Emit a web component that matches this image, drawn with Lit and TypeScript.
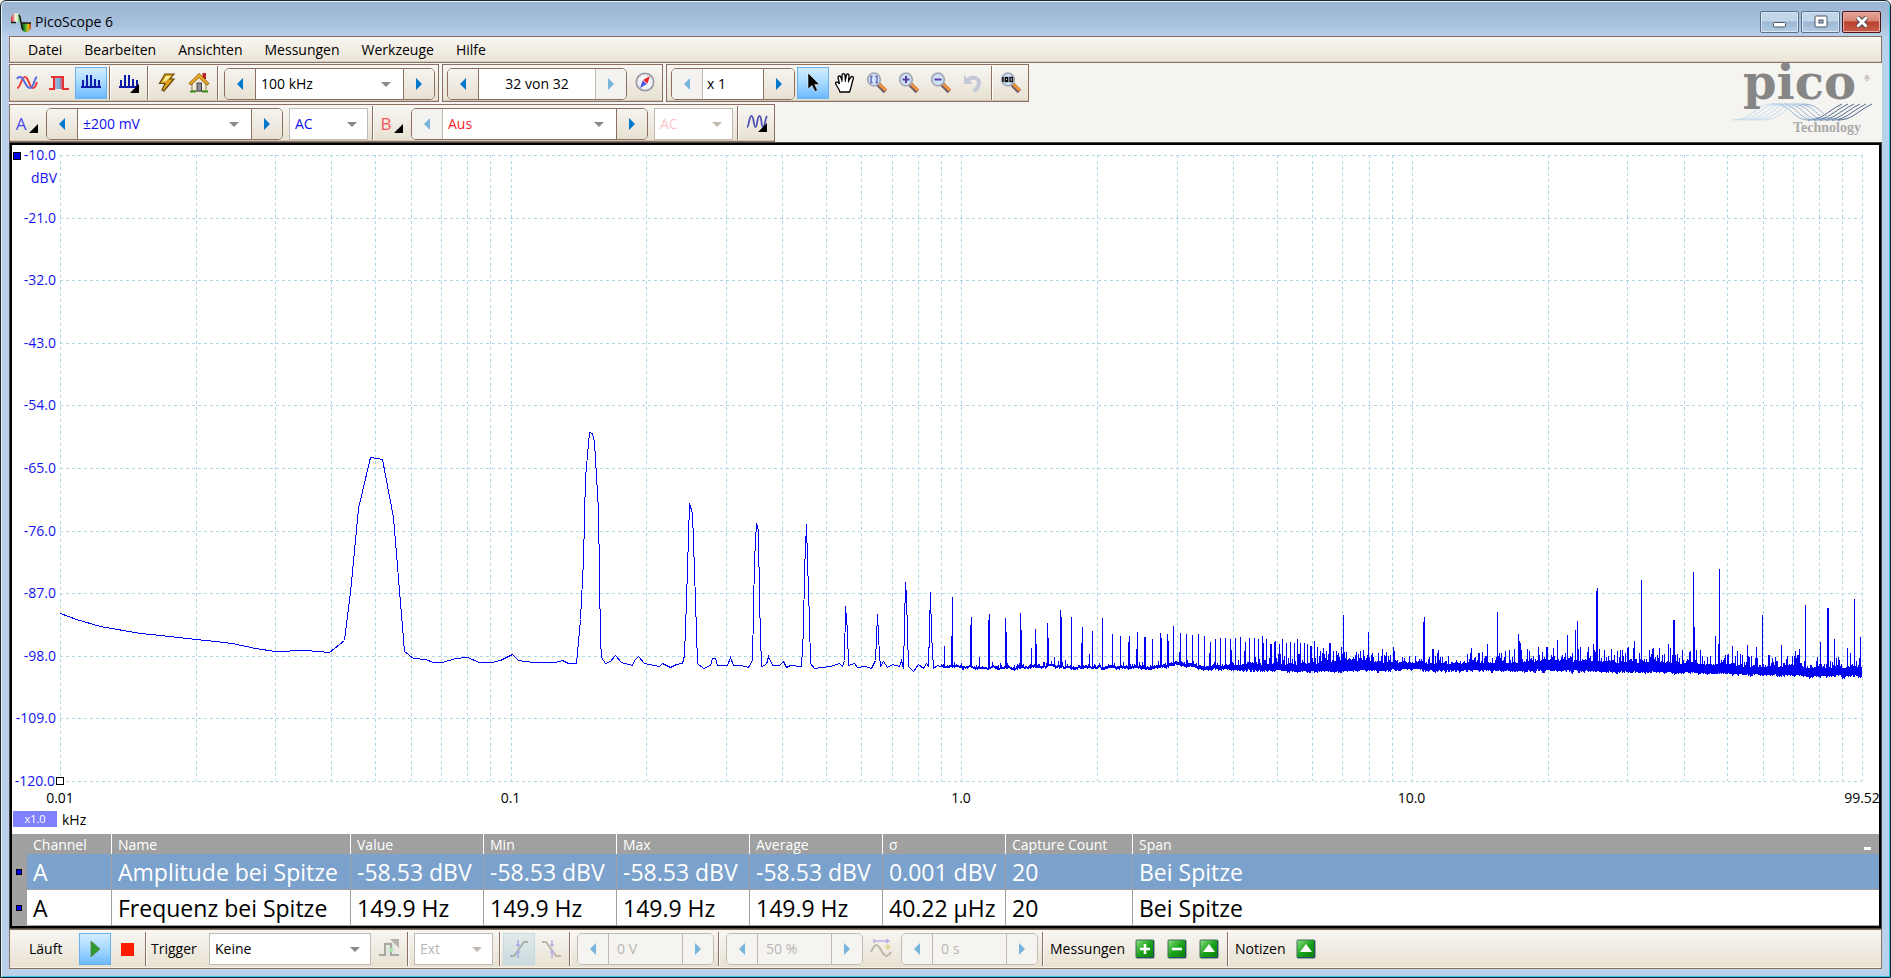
import { LitElement, html, css, svg, nothing } from "lit";
import { customElement } from "lit/decorators.js";
import { classMap } from "lit/directives/class-map.js";

/* ---------- spectrum data, in plot units (1802 x 626) ---------- */

const PLOT_W = 1802;
const PLOT_H = 626;
const DECADE = PLOT_W / Math.log10(9952);

const LOW_BAND: number[][] = [
  [0, 458], [16, 464], [40, 471], [80, 478], [100, 480], [136, 484], [155, 486], [172, 488], [195, 493], [215, 496],
  [245, 495], [269, 497], [284, 485], [290, 437], [298, 353], [310, 302], [322, 304], [333, 362], [344, 496],
  [353, 503], [365, 504], [373, 507], [382, 507], [395, 503], [407, 502], [419, 507], [431, 507], [440, 505],
  [452, 499], [458, 505], [473, 507], [495, 507], [502, 505], [508, 508], [516, 508], [520, 464], [523, 405],
  [525, 322], [529, 277], [532, 278], [534, 287], [538, 355], [540, 485], [541, 502], [545, 508], [550, 506],
  [555, 500], [561, 507], [572, 510], [574, 505], [578, 501], [584, 508], [599, 511], [602, 508], [610, 512],
  [616, 509], [622, 508], [624, 500], [626, 445], [629, 348], [632, 358], [635, 445], [637, 508], [643, 513],
  [650, 510], [652, 503], [655, 503], [657, 510], [667, 510], [670, 502], [673, 510], [681, 510], [688, 512],
  [692, 505], [694, 405], [696, 368], [698, 375], [699, 445], [701, 511], [706, 509], [708, 501], [712, 510],
  [719, 510], [723, 506], [726, 512], [730, 510], [741, 511], [743, 475], [744, 415], [746, 369], [747, 405],
  [749, 465], [750, 508], [754, 513], [762, 512], [770, 511], [779, 508], [782, 511], [784, 505], [785, 451],
  [787, 475], [788, 510], [794, 508], [797, 512], [805, 511], [811, 513], [815, 505], [817, 459], [819, 500],
  [820, 511], [823, 506], [827, 512], [832, 509], [839, 511], [841, 505], [843, 513], [845, 427], [846, 442],
  [848, 511], [853, 516], [858, 509], [863, 513], [866, 508], [868, 511], [870, 437], [871, 479], [873, 513],
  [877, 510], [880, 511],
];

/* column, top of the spike */
const SPIKES: number[][] = [
  [884, 491], [891, 481], [892, 442], [911, 462], [910, 470], [919, 502], [929, 459], [928, 465], [945, 463],
  [946, 477], [960, 458], [961, 475], [971, 493], [975, 474], [976, 489], [987, 468], [988, 483], [994, 502],
  [1005, 505], [1000, 455], [1001, 462], [1011, 462], [1022, 472], [1021, 488], [1029, 499], [1032, 476],
  [1042, 463], [1052, 479], [1060, 481], [1069, 481], [1068, 487], [1077, 477], [1076, 494], [1085, 482],
  [1084, 482], [1092, 484], [1100, 478], [1101, 483], [1107, 479], [1108, 486], [1113, 471], [1120, 478],
  [1119, 497], [1126, 479], [1132, 480], [1138, 479], [1144, 481], [1150, 487], [1149, 498], [1155, 484],
  [1160, 483], [1165, 483], [1170, 484], [1171, 495], [1175, 483], [1180, 482], [1185, 487], [1184, 496],
  [1189, 483], [1194, 483], [1198, 484], [1202, 481], [1203, 488], [1206, 484], [1211, 489], [1210, 489],
  [1215, 486], [1214, 487], [1219, 489], [1222, 484], [1226, 488], [1230, 487], [1234, 488], [1237, 484],
  [1240, 488], [1244, 488], [1247, 489], [1251, 491], [1250, 491], [1254, 486], [1257, 492], [1260, 496],
  [1263, 493], [1266, 496], [1270, 488], [1269, 488], [1273, 496], [1276, 496], [1278, 498], [1281, 492],
  [1283, 460], [1284, 497], [1286, 497], [1308, 477], [1311, 500], [1313, 502], [1322, 494], [1333, 492],
  [1334, 496], [1364, 462], [1363, 467], [1373, 494], [1372, 494], [1378, 495], [1411, 493], [1427, 489],
  [1437, 457], [1458, 479], [1459, 486], [1460, 488], [1461, 495], [1478, 492], [1497, 485], [1507, 480],
  [1515, 475], [1517, 466], [1520, 492], [1533, 489], [1534, 495], [1537, 433], [1536, 436], [1539, 494],
  [1557, 496], [1562, 495], [1568, 492], [1573, 493], [1574, 486], [1581, 425], [1589, 495], [1599, 493],
  [1608, 489], [1613, 465], [1614, 465], [1629, 497], [1633, 417], [1634, 472], [1640, 495], [1655, 481],
  [1658, 489], [1659, 414], [1672, 491], [1677, 496], [1687, 490], [1696, 492], [1702, 460], [1721, 490],
  [1727, 501], [1735, 496], [1739, 494], [1745, 450], [1760, 487], [1767, 453], [1768, 453], [1774, 484],
  [1787, 493], [1790, 498], [1794, 444], [1800, 482],
];

/* noise floor: column, upper edge, lower edge, jitter */
const FLOOR: number[][] = [
  [880, 511, 512, 3], [1000, 511, 512, 3], [1100, 511, 513, 3], [1118, 506, 508, 3], [1135, 511, 513, 3],
  [1200, 509, 514, 5], [1250, 508, 515, 9], [1285, 505, 515, 10], [1310, 506, 514, 8], [1345, 508, 513, 9],
  [1400, 508, 514, 8], [1470, 507, 514, 11], [1500, 505, 514, 10], [1540, 506, 515, 10], [1600, 508, 516, 10],
  [1660, 509, 517, 9], [1720, 512, 519, 8], [1802, 512, 520, 9],
];

function floorAt(x: number): number[] {
  let i = 1;
  while (i < FLOOR.length - 1 && FLOOR[i][0] < x) i++;
  const a = FLOOR[i - 1];
  const b = FLOOR[i];
  const t = (x - a[0]) / (b[0] - a[0]);
  return [1, 2, 3].map((k) => a[k] + (b[k] - a[k]) * t);
}

function tracePath(): string {
  let seed = 97;
  const rnd = () => {
    seed = (seed * 16807) % 2147483647;
    return seed / 2147483647;
  };
  const spikes = new Map(SPIKES.map(([x, y]) => [x, y] as [number, number]));
  const parts = LOW_BAND.map(([x, y], i) => `${i ? "L" : "M"}${x + 0.5} ${y + 0.5}`);
  let drift = 0;
  for (let x = 881; x < PLOT_W; x++) {
    const [up, low, jit] = floorAt(x);
    const sparse = x < 1180;
    drift = drift * 0.7 + (rnd() - 0.5) * 2;
    let top = up + drift - Math.pow(rnd(), sparse ? 6 : 3) * jit * 1.4;
    const bottom = low + drift * (sparse ? 1 : 0.5) + Math.pow(rnd(), 2) * (sparse ? 1 : 3);
    const spike = spikes.get(x);
    if (spike !== undefined) top = spike;
    parts.push(`L${x + 0.5} ${Math.round(bottom)}V${Math.round(top)}V${Math.round(bottom)}`);
  }
  return parts.join("");
}

const TRACE = tracePath();

function gridColumns(): number[] {
  const xs: number[] = [];
  for (let d = 0; d < 4; d++) for (let m = 1; m < 10; m++) xs.push(Math.round(DECADE * (d + Math.log10(m))));
  xs.push(PLOT_W);
  return xs;
}

const Y_LABELS = ["-10.0", "-21.0", "-32.0", "-43.0", "-54.0", "-65.0", "-76.0", "-87.0", "-98.0", "-109.0", "-120.0"];
const X_LABELS = ["0.01", "0.1", "1.0", "10.0", "99.52"];

/* ---------- icons ---------- */

const icon = (body: unknown, size = 22) =>
  html`<svg width=${size} height=${size} viewBox="0 0 22 22" aria-hidden="true">${body}</svg>`;

const corner = svg`<path d="M21 12V21H12Z" fill="#000"/>`;

const icons = {
  scope: icon(svg`<path d="M1 16C5 16 5 5 9 5C13 5 13 16 17 16C19.500 16 20 13 21 10" fill="none" stroke="#f03a3a" stroke-width="2"/>
    <path d="M1 7C2 5 4 4 6 6C9 9 10 16 14 16C18 16 18 6 21 5" fill="none" stroke="#5a6fe6" stroke-width="2"/>`),
  persistence: icon(svg`<defs><linearGradient id="pg"><stop offset="0" stop-color="#e8a0a8"/><stop offset=".5" stop-color="#6fb6ea"/><stop offset="1" stop-color="#f04040"/></linearGradient></defs>
    <rect x="5" y="4" width="11" height="13" fill="url(#pg)"/><path d="M1 17H6V5H15V17H21" fill="none" stroke="#e83030" stroke-width="2"/><path d="M3 5H15" stroke="#e83030" stroke-width="2"/>`),
  spectrum: icon(svg`<path d="M3 8V15M7 3V15M11 3V15M15 7V15M19 8V15" stroke="#0c1ca8" stroke-width="2"/><path d="M1 15H21" stroke="#0c1ca8" stroke-width="2"/>`),
  spectrumMore: icon(svg`<path d="M3 8V15M7 3V15M11 3V15M15 7V15M19 8V15" stroke="#0c1ca8" stroke-width="2"/><path d="M1 15H21" stroke="#0c1ca8" stroke-width="2"/>${corner}`),
  bolt: icon(svg`<path d="M9 2H18L14 7H18L8 19L6 18L9 11.500H3.500Z" fill="#dba01c" stroke="#6a4608" stroke-width="1.200"/><path d="M10 4H15L10 9L6.500 10Z" fill="#fff0a0"/>`),
  home: icon(svg`<rect x="14.500" y="1" width="3.500" height="6" fill="#c02020"/><path d="M4 11V19H18V11L11 5Z" fill="#f4ecd8" stroke="#8a7a58" stroke-width="1"/><path d="M1 11.500L11 1.500L21 11.500L19 13L11 5.500L3 13Z" fill="#f0b020" stroke="#8a5c10" stroke-width="1"/><rect x="9" y="11" width="4.500" height="8" fill="#8a8f98" stroke="#444"/><path d="M2 19.500H8M14 19.500H20" stroke="#3a9018" stroke-width="2"/>`),
  compass: icon(svg`<circle cx="11" cy="10" r="8.700" fill="#f6f6fb" stroke="#9a9aa4" stroke-width="1.800"/><circle cx="11" cy="10" r="6.500" fill="none" stroke="#c0c0cc" stroke-dasharray="1 3"/><path d="M16 4L13.500 11.500L9 8Z" fill="#f02020"/><path d="M6 16L8.500 8.500L13 12Z" fill="#4a58e8"/>`),
  cursor: icon(svg`<path d="M6 1V17L10 13.500L13 19.500L15.500 18.300L12.700 12.500H17.500Z" fill="#000" stroke="#fff" stroke-width=".5"/>`),
  hand: icon(svg`<path d="M6 20C5 16 1.500 13 1.500 11C2 9.500 4.500 10 5.500 12L4 5.500C4 3.500 6.500 3.500 7 5.500L8 8.500L8 3C8.500 1 10.500 1.500 11 3L11.300 8L12.500 2.800C13.500 1.200 15.300 2 15 4L14.500 9L17 5C18.200 3.800 20 5 19.300 6.800C18 10 17.500 15 15.500 20Z" fill="#fff" stroke="#000" stroke-width="1.300"/><path d="M8 8.500V10M11.300 8V10M14.500 9V10.500" stroke="#000"/>`),
  undo: icon(svg`<path d="M5 9C9 4 17 5 17 11C17 14 15 16.500 12 19" fill="none" stroke="#c3c9d8" stroke-width="4"/><path d="M2 3V12H11Z" fill="#c3c9d8"/>`),
  wave: icon(svg`<path d="M1 15C3 15 3 4 5.500 4C8 4 7.500 15 9.500 15C11.500 15 11 4 13.500 4C16 4 15 15 17 15C19 15 19 7 21 4" fill="none" stroke="#5054b4" stroke-width="1.800"/><path d="M21 11V20H12Z" fill="#000"/>`),
  pulse: icon(svg`<rect x="9" y="4" width="8" height="15" fill="#dfe5e0"/><path d="M1 17H7V6H13V17H21" fill="none" stroke="#a9a79f" stroke-width="2"/><path d="M12 1H21V10Z" fill="#b5b1a8"/><circle cx="13" cy="12" r="2" fill="#a4e8a0"/>`),
  rising: icon(svg`<path d="M2 18H6L16 4H20" fill="none" stroke="#a8b2a8" stroke-width="2"/><path d="M10 2V9M10 12V20M8 7H12M8 14H12" stroke="#a9a8e4" stroke-width="1.500"/>`),
  falling: icon(svg`<path d="M2 4H6L16 18H21" fill="none" stroke="#bdb7a8" stroke-width="2"/><path d="M12 2V9M12 12V20M10 7H14M10 14H14" stroke="#b7b0e4" stroke-width="1.500"/>`),
  pretrigger: icon(svg`<path d="M1 14C5 5 7 5 11 12S17 20 21 14" fill="none" stroke="#bdb7a8" stroke-width="2"/><path d="M4 3H18M4 1V5M16 1L19 3L16 5" fill="none" stroke="#b7b0e8" stroke-width="1.500"/><path d="M18 6L21 9L18 12L15 9Z" fill="#e0d890"/>`),
};

const magnifier = (mark: unknown) =>
  icon(svg`<path d="M12 12L19.500 19.500" stroke="#6c5a6c" stroke-width="5"/><path d="M12.500 11.500L20 18.500" stroke="#f0913a" stroke-width="3"/>
    <circle cx="8" cy="7.500" r="6.300" fill="#cfe4fa" stroke="#a5a9b8" stroke-width="1.800"/>${mark}`);

const zoomArea = magnifier(svg`<path d="M6.500 4.500H5V10.500H6.500M9.500 4.500H11V10.500H9.500" fill="none" stroke="#5c5ca8" stroke-width="1.300"/>`);
const zoomIn = magnifier(svg`<path d="M8 4V11M4.500 7.500H11.500" stroke="#5a3ca0" stroke-width="2"/>`);
const zoomOut = magnifier(svg`<path d="M4.500 7.500H11.500" stroke="#5a3ca0" stroke-width="2"/>`);
const zoomFull = magnifier(svg`<path d="M3 5V10" stroke="#111" stroke-width="1.600"/><rect x="5.300" y="5.500" width="2.400" height="4" fill="none" stroke="#111" stroke-width="1.400"/><rect x="10" y="5.500" width="2.400" height="4" fill="none" stroke="#111" stroke-width="1.400"/>`);

const greenMark = (mark: unknown) =>
  html`<svg width="20" height="20" viewBox="0 0 20 20" aria-hidden="true"><defs><linearGradient id="gg" x2="1" y2="1"><stop offset="0" stop-color="#8fe08a"/><stop offset=".5" stop-color="#17a317"/><stop offset="1" stop-color="#0a7a0a"/></linearGradient></defs>
  <rect x="1" y="1" width="18" height="18" rx="1" fill="url(#gg)" stroke="#3d6e50"/><path d="M2 18.500H18.500V2" fill="none" stroke="#274d70"/>${mark}</svg>`;
const plus = greenMark(svg`<path d="M10 5V15M5 10H15" stroke="#fff" stroke-width="2.600"/>`);
const minus = greenMark(svg`<path d="M5 10H15" stroke="#fff" stroke-width="2.600"/>`);
const upward = greenMark(svg`<path d="M10 5L16 13H4Z" fill="#fff"/>`);

const sep = html`<span class="sep"></span>`;

const tool = (label: string, content: unknown, on = false, disabled = false) =>
  html`<button class=${classMap({ tool: true, on })} aria-label=${label} title=${label} ?disabled=${disabled}>${content}</button>`;

const drop = (label: string, value: string, cls = "", disabled = false) =>
  html`<span class="drop ${cls}"><select aria-label=${label} ?disabled=${disabled}><option>${value}</option></select></span>`;

interface Stepper {
  label: string;
  value: string;
  cls: string;
  list?: boolean;
  noPrev?: boolean;
  noNext?: boolean;
  disabled?: boolean;
}

const stepper = (s: Stepper) => html`
  <span class="stepper ${s.cls} ${s.disabled ? "off" : ""}">
    <button class=${classMap({ step: true, dim: !!s.noPrev })} aria-label="${s.label} zurück" ?disabled=${s.disabled || s.noPrev}>
      <svg width="8" height="12" viewBox="0 0 8 12"><path d="M7 0V12L1 6Z" /></svg>
    </button>
    ${s.list
      ? drop(s.label, s.value, "", s.disabled)
      : html`<input type="text" aria-label=${s.label} .value=${s.value} ?disabled=${s.disabled} />`}
    <button class=${classMap({ step: true, next: true, dim: !!s.noNext })} aria-label="${s.label} weiter" ?disabled=${s.disabled || s.noNext}>
      <svg width="8" height="12" viewBox="0 0 8 12"><path d="M1 0V12L7 6Z" /></svg>
    </button>
  </span>`;

/* ---------- shared control styles ---------- */

const controls = css`
  * {
    box-sizing: border-box;
  }
  button,
  input,
  select {
    font: inherit;
    color: inherit;
    margin: 0;
    padding: 0;
    border: 0;
    border-radius: 0;
    background: none;
  }
  button {
    display: inline-flex;
    align-items: center;
    justify-content: center;
  }
  .tool {
    width: 32px;
    height: 32px;
    flex: none;
    border: 1px solid transparent;
  }
  .tool.on {
    border-color: #66b2ee;
    background: linear-gradient(#d3edff, #a5d8ff 50%, #6cbaff);
  }
  .tool.on:disabled {
    border-color: #c3dbe4;
    background: linear-gradient(#e2eaea, #cbdbdf);
  }
  .sep {
    flex: none;
    width: 2px;
    height: 34px;
    margin: 0 2px;
    border-left: 1px solid #8a7060;
    background: #fdfcfa;
  }
  .drop {
    display: inline-grid;
    align-items: center;
    height: 32px;
    margin: 0 2px 0 3px;
    border: 1px solid #c2bbb4;
    background: #fff;
  }
  .drop > select,
  .drop::after {
    grid-area: 1 / 1;
  }
  .drop > select {
    appearance: none;
    width: 100%;
    height: 30px;
    padding: 0 22px 0 5px;
    opacity: 1;
  }
  .drop::after {
    content: "";
    justify-self: end;
    margin-right: 10px;
    border: 5px solid transparent;
    border-top-color: #8a8a8a;
    border-bottom: 0;
    pointer-events: none;
  }
  .stepper {
    display: inline-flex;
    flex: none;
    height: 32px;
    margin: 0 2px 0 4px;
    border: 1px solid #8a7060;
    border-radius: 5px;
    overflow: hidden;
    background: #fff;
  }
  .stepper > .drop {
    flex: 1;
    margin: 0;
    border: 0;
    height: 30px;
    min-width: 0;
  }
  .stepper > .drop::after {
    margin-right: 12px;
  }
  .stepper input {
    flex: 1;
    width: 0;
    padding: 0 4px;
  }
  .step {
    width: 31px;
    flex: none;
    border-right: 1px solid #8a7060;
    background: linear-gradient(#f6f4f0, #e8e1d2);
  }
  .step.next {
    border-right: 0;
    border-left: 1px solid #8a7060;
  }
  .step path {
    fill: #0078cc;
  }
  .step.dim {
    border-color: #c2bbb4;
    background: #f4f2ee;
  }
  .step:disabled path {
    fill: #76b4dc;
  }
  .off {
    border-color: #c2bbb4;
    background: #f6f4f1;
    color: #b8b6b4;
  }
  .off .step {
    border-color: #c2bbb4;
    background: #f6f4f0;
  }
`;

/* ---------- channel and capture toolbars ---------- */

@customElement("scope-toolbars")
export class ScopeToolbars extends LitElement {
  static styles = [
    controls,
    css`
      :host {
        display: flex;
        justify-content: space-between;
        align-items: flex-start;
        padding: 1px 4px 0 0;
        background: #f6f4f1;
      }
      .bars {
        display: flex;
        flex-direction: column;
        align-items: flex-start;
        gap: 2px;
      }
      .line {
        display: flex;
        gap: 3px;
      }
      .group {
        display: flex;
        align-items: center;
        height: 38px;
        padding: 0 1px;
        border: 1px solid #8a7060;
        background: linear-gradient(#f8f6f3, #f0ece3 50%, #e8e0d0);
        box-shadow: inset 0 -1px #d0c6b8;
      }
      .group > .stepper {
        margin: 2px 2px 0 3px;
      }
      .group > .stepper.range {
        margin-right: 3px;
      }
      .group > .drop {
        margin-top: 2px;
      }
      .rate { width: 211px; }
      .buffer { width: 180px; }
      .buffer input { text-align: center; }
      .zoom { width: 124px; }
      .range { width: 237px; }
      .coupling { width: 79px; }
      .a { color: #1010f0; }
      .b { color: #fa1e2e; }
      .faint { color: #fcc4ca; }
      .faint::after { border-top-color: #c2bbb4; }
      .channel {
        display: flex;
        align-items: flex-end;
        gap: 3px;
        padding-top: 2px;
        font-size: 17px;
        line-height: 20px;
      }
      .initial { opacity: 0.75; }
      .logo { padding-top: 2px; flex: none; }
      .logo svg { display: block; overflow: visible; }
    `,
  ];

  private channel(name: string) {
    return html`<span class="channel ${name.toLowerCase()}"
      ><span class="initial">${name}</span><svg width="9" height="11" viewBox="0 0 9 11"><path d="M9 1V10H0Z" fill="#000" /></svg
    ></span>`;
  }

  private logo() {
    const strand = (i: number) =>
      svg`<path d="M${2 + i * 6} 54C${24 + i * 6} 54 ${24 + i * 6} 38 ${42 + i * 6} 38" stroke="#c3dcf0"/>
        <path d="M${42 + i * 6} 38C${64 + i * 6} 38 ${60 + i * 6} 54 ${80 + i * 6} 54" stroke="#8fb0d0"/>
        <path d="M${78 + i * 6} 54C${92 + i * 6} 54 ${96 + i * 6} 46 ${112 + i * 6} 38" stroke="#50688c"/>`;
    return html`<svg width="148" height="72" viewBox="0 0 148 72" role="img" aria-label="pico Technology">
      <g fill="none" stroke-width="1">${[0, 1, 2, 3, 4, 5].map(strand)}</g>
      <text x="13" y="33" font-family="DejaVu Serif" font-weight="700" font-size="48" fill="#868686">pico</text>
      <text x="134" y="15" font-family="Liberation Serif" font-size="8" fill="#868686">®</text>
      <text x="63" y="66" font-family="Liberation Serif" font-weight="700" font-size="14" fill="#a9a9a9">Technology</text>
    </svg>`;
  }

  render() {
    return html`
      <div class="bars">
        <div class="line">
          <div class="group">
            ${tool("Oszilloskopmodus", icons.scope)} ${tool("Nachleuchtmodus", icons.persistence)}
            ${tool("Spektralmodus", icons.spectrum, true)} ${sep} ${tool("Spektrumoptionen", icons.spectrumMore)} ${sep}
            ${tool("Auto-Setup", icons.bolt)} ${tool("Startseite", icons.home)} ${sep}
            ${stepper({ label: "Frequenzbereich", value: "100 kHz", cls: "rate", list: true })}
          </div>
          <div class="group">
            ${stepper({ label: "Puffer", value: "32 von 32", cls: "buffer", noNext: true })}
            ${tool("Puffernavigator", icons.compass)}
          </div>
          <div class="group">
            ${stepper({ label: "Zoomfaktor", value: "x 1", cls: "zoom", noPrev: true })}
            ${tool("Auswahl", icons.cursor, true)} ${tool("Verschieben", icons.hand)} ${tool("Bereich vergrößern", zoomArea)}
            ${tool("Vergrößern", zoomIn)} ${tool("Verkleinern", zoomOut)} ${tool("Zoom rückgängig", icons.undo, false, true)}
            ${sep} ${tool("Zoom 100 %", zoomFull)}
          </div>
        </div>
        <div class="group">
          ${tool("Kanal A", this.channel("A"))}
          ${stepper({ label: "Bereich A", value: "±200 mV", cls: "range a", list: true })}
          ${drop("Kopplung A", "AC", "coupling a")} ${sep} ${tool("Kanal B", this.channel("B"))}
          ${stepper({ label: "Bereich B", value: "Aus", cls: "range b", list: true, noPrev: true })}
          ${drop("Kopplung B", "AC", "coupling faint", true)} ${sep} ${tool("Rechenkanäle", icons.wave)}
        </div>
      </div>
      <div class="logo">${this.logo()}</div>
    `;
  }
}

/* ---------- spectrum view ---------- */

@customElement("spectrum-view")
export class SpectrumView extends LitElement {
  static styles = css`
    * {
      box-sizing: border-box;
    }
    :host {
      display: grid;
      grid-template-columns: 48px minmax(0, 1fr) 17px;
      grid-template-rows: 10px minmax(0, 1fr) 53px;
      background: #fff;
      min-height: 0;
    }
    .yaxis {
      grid-area: 2 / 1;
      position: relative;
      display: flex;
      flex-direction: column;
      justify-content: space-between;
      padding-right: 4px;
      color: #1414f0;
    }
    .ytick {
      display: flex;
      align-items: center;
      justify-content: flex-end;
      height: 0;
      white-space: nowrap;
    }
    .ytick:last-of-type {
      padding-right: 1px;
    }
    .unit {
      position: absolute;
      top: 13px;
      right: 3px;
    }
    .handle {
      position: absolute;
      width: 8px;
      height: 8px;
      border: 1px solid #000;
    }
    .top {
      top: -3px;
      left: 1px;
      background: #0000f0;
    }
    .origin {
      bottom: -4px;
      right: -4px;
      z-index: 1;
      background: #fff;
    }
    .plot {
      grid-area: 2 / 2;
      display: block;
      width: 100%;
      height: 100%;
      overflow: visible;
    }
    .plot path,
    .plot line {
      vector-effect: non-scaling-stroke;
      shape-rendering: crispEdges;
      fill: none;
    }
    .plot line {
      stroke: #add8e6;
      stroke-dasharray: 3 3;
    }
    .plot path {
      stroke: #0000f5;
    }
    .xaxis {
      grid-area: 3 / 2;
      display: flex;
      justify-content: space-between;
      padding-top: 17px;
    }
    .xtick {
      display: flex;
      align-items: center;
      justify-content: center;
      width: 0;
      height: 0;
    }
    .scale {
      grid-area: 3 / 1 / 4 / 3;
      align-self: end;
      justify-self: start;
      display: flex;
      align-items: center;
      gap: 5px;
      padding: 0 0 4px 1px;
      line-height: 20px;
    }
    .factor {
      width: 44px;
      height: 16px;
      margin-bottom: 2px;
      background: #8080ff;
      color: #fff;
      font-size: 11px;
      line-height: 16px;
      text-align: center;
    }
  `;

  render() {
    return html`
      <div class="yaxis">
        ${Y_LABELS.map((t) => html`<div class="ytick">${t}</div>`)}
        <span class="unit">dBV</span>
        <span class="handle top"></span>
        <span class="handle origin"></span>
      </div>
      <svg class="plot" viewBox="0 0 ${PLOT_W} ${PLOT_H}" preserveAspectRatio="none" role="img" aria-label="Spektrum Kanal A">
        ${gridColumns().map((x) => svg`<line x1=${x + 0.5} x2=${x + 0.5} y1="0" y2=${PLOT_H}></line>`)}
        ${Y_LABELS.map((_, i) => {
          const y = Math.round((i * PLOT_H) / 10) + 0.5;
          return svg`<line x1="0" x2=${PLOT_W} y1=${y} y2=${y}></line>`;
        })}
        <path d=${TRACE}></path>
      </svg>
      <div class="xaxis">${X_LABELS.map((t) => html`<span class="xtick">${t}</span>`)}</div>
      <div class="scale"><span class="factor">x1.0</span>kHz</div>
    `;
  }
}

/* ---------- measurement table ---------- */

@customElement("measurement-table")
export class MeasurementTable extends LitElement {
  static styles = css`
    * {
      box-sizing: border-box;
    }
    :host {
      display: block;
    }
    table {
      width: 100%;
      table-layout: fixed;
      border-collapse: separate;
      border-spacing: 0;
      background: #fff;
    }
    th,
    td {
      padding: 2px 0 0 6px;
      text-align: left;
      font-weight: 400;
      white-space: nowrap;
    }
    th {
      height: 20px;
      line-height: 18px;
      background: #a0a0a0;
      color: #fff;
    }
    td {
      height: 36px;
      line-height: 33px;
      font-size: 23px;
      border-left: 1px solid #a0a0a0;
      border-bottom: 1px solid #a0a0a0;
    }
    th + th + th {
      border-left: 1px solid #fff;
    }
    .mark {
      width: 15px;
      padding: 0 0 0 4px;
      border: 0;
      background: #a0a0a0;
    }
    .mark + td {
      padding-left: 6px;
      border-left: 0;
    }
    .mark i {
      display: block;
      width: 6px;
      height: 6px;
      border: 1px solid #000;
      background: #0000ff;
    }
    .active td:not(.mark) {
      background: #7aa2cc;
      color: #fff;
    }
    .c1 { width: 84px; }
    .c2 { width: 239px; }
    .c3 { width: 133px; }
    .c4 { width: 123px; }
    .c5 { width: 127px; }
    .last {
      display: flex;
      justify-content: space-between;
      align-items: center;
      padding-right: 8px;
    }
    .fold {
      width: 7px;
      height: 3px;
      margin-top: 6px;
      padding: 0;
      border: 0;
      background: #fff;
    }
  `;

  private rows = [
    ["A", "Amplitude bei Spitze", "-58.53 dBV", "-58.53 dBV", "-58.53 dBV", "-58.53 dBV", "0.001 dBV", "20", "Bei Spitze"],
    ["A", "Frequenz bei Spitze", "149.9 Hz", "149.9 Hz", "149.9 Hz", "149.9 Hz", "40.22 µHz", "20", "Bei Spitze"],
  ];

  render() {
    return html`<table>
      <thead>
        <tr>
          <th class="mark"></th>
          <th class="c1">Channel</th>
          <th class="c2">Name</th>
          <th class="c3">Value</th>
          <th class="c3">Min</th>
          <th class="c3">Max</th>
          <th class="c3">Average</th>
          <th class="c4">σ</th>
          <th class="c5">Capture Count</th>
          <th><span class="last">Span<button class="fold" aria-label="Tabelle einklappen"></button></span></th>
        </tr>
      </thead>
      <tbody>
        ${this.rows.map(
          (r, i) => html`<tr class=${i === 0 ? "active" : nothing}>
            <td class="mark"><i></i></td>
            ${r.map((v) => html`<td>${v}</td>`)}
          </tr>`,
        )}
      </tbody>
    </table>`;
  }
}

/* ---------- trigger and measurement bar ---------- */

@customElement("trigger-bar")
export class TriggerBar extends LitElement {
  static styles = [
    controls,
    css`
      :host {
        box-sizing: border-box;
        display: flex;
        align-items: center;
        height: 40px;
        padding-left: 19px;
        border: 1px solid #8a7060;
        background: linear-gradient(#f8f6f3, #f0ece3 50%, #e8e0d0);
        box-shadow: inset 0 -1px #f6f2ea;
      }
      .state { width: 50px; }
      .caption { padding: 0 4px; }
      .title { width: 57px; padding: 0 2px; }
      .mode { width: 162px; }
      .source { width: 79px; margin-right: 4px; color: #b8b6b4; }
      .source::after { border-top-color: #c2bbb4; }
      .level { width: 137px; }
      .level input { padding-left: 8px; }
      .stop { width: 13px; height: 13px; background: #ff1a00; }
    `,
  ];

  render() {
    return html`
      <span class="state">Läuft</span>
      ${tool("Start", icon(svg`<path d="M7 3L16 11L7 19Z" fill="#2e9a2e" stroke="#5c6a30" stroke-width=".6"/>`), true)}
      ${tool("Stopp", html`<span class="stop"></span>`)} ${sep}
      <span class="title">Trigger</span>
      ${drop("Trigger", "Keine", "mode")} ${tool("Erweiterte Trigger", icons.pulse, false, true)} ${sep}
      ${drop("Triggerquelle", "Ext", "source", true)} ${sep}
      ${tool("Steigende Flanke", icons.rising, true, true)} ${tool("Fallende Flanke", icons.falling, false, true)} ${sep}
      ${stepper({ label: "Schwelle", value: "0 V", cls: "level", disabled: true })} ${sep}
      ${stepper({ label: "Vortrigger", value: "50 %", cls: "level", disabled: true })}
      ${tool("Nachtriggerverzögerung", icons.pretrigger, false, true)}
      ${stepper({ label: "Verzögerung", value: "0 s", cls: "level", disabled: true })} ${sep}
      <span class="caption">Messungen</span>
      ${tool("Messung hinzufügen", plus)} ${tool("Messung entfernen", minus)} ${tool("Messung bearbeiten", upward)} ${sep}
      <span class="caption">Notizen</span>
      ${tool("Notizen anzeigen", upward)}
    `;
  }
}

/* ---------- application window ---------- */

@customElement("app-root")
export class AppRoot extends LitElement {
  static styles = css`
    * {
      box-sizing: border-box;
    }
    :host {
      box-sizing: border-box;
      display: flex;
      flex-direction: column;
      height: 100vh;
      padding: 0 8px 8px;
      border: 1px solid #1c242c;
      border-radius: 6px 6px 0 0;
      background: linear-gradient(#99b3d0, #a9c2de 24px, #b9d1ea 36px);
      box-shadow: inset 0 1px #e8f2fa, inset 1px 0 #e8f4fc, inset -1px -1px #35c4e4;
      font: 14px/20px "Open Sans", "Noto Sans", sans-serif;
      color: #000;
    }
    .titlebar {
      display: flex;
      align-items: center;
      height: 35px;
      flex: none;
    }
    .name {
      flex: 1;
      padding: 7px 0 0 4px;
    }
    .badge {
      margin: 8px 0 0 2px;
    }
    .winbtns {
      display: flex;
      gap: 2px;
      padding: 7px 1px 0 0;
    }
    .winbtn {
      display: flex;
      align-items: center;
      justify-content: center;
      width: 39px;
      height: 22px;
      padding: 0;
      border: 1px solid #5b7088;
      border-radius: 2px;
      background: linear-gradient(#c2d6ea 45%, #9ab6d2 50%, #b4cde6);
      box-shadow: inset 0 0 0 1px #d8e6f4;
    }
    .close {
      border-color: #4c1414;
      background: linear-gradient(#e5a79a, #d88474 45%, #b8402c 50%, #c8604c);
      box-shadow: inset 0 0 0 1px #e8b0a4;
    }
    .menu {
      display: flex;
      align-items: center;
      height: 27px;
      flex: none;
      padding-left: 7px;
      border: 1px solid #8a7060;
      background: linear-gradient(#f8f6f2, #ece5d6);
      box-shadow: inset 0 -1px #d8d0c4;
    }
    .item {
      padding: 0 11px;
      border: 0;
      background: none;
      font: inherit;
      color: inherit;
    }
    .view {
      flex: 1;
      min-height: 0;
      display: flex;
      flex-direction: column;
      padding: 2px;
      border: 1px solid #4a4642;
      background: #000;
    }
    spectrum-view {
      flex: 1;
    }
  `;

  render() {
    return html`
      <header class="titlebar">
        <svg class="badge" width="20" height="20" viewBox="0 0 20 20" aria-hidden="true">
          <defs>
            <linearGradient id="crest">
              <stop offset="0" stop-color="#d01818" /><stop offset=".45" stop-color="#fff4ea" />
              <stop offset=".65" stop-color="#c8f0c0" /><stop offset="1" stop-color="#108818" />
            </linearGradient>
            <linearGradient id="trough">
              <stop offset="0" stop-color="#183c18" /><stop offset=".4" stop-color="#28a028" />
              <stop offset=".7" stop-color="#e0c020" /><stop offset="1" stop-color="#d02810" />
            </linearGradient>
          </defs>
          <path d="M0 9V6Q1 0 5 0Q9 0 10 6V9Z" fill="url(#crest)" />
          <path d="M10 10V14Q11 19 15 19Q19 19 20 14V10Z" fill="url(#trough)" />
          <path d="M0 9.500H5M8 2Q9.500 4 10 9T12 17M10 10H20" fill="none" stroke="#181818" stroke-width="1.500" />
        </svg>
        <span class="name">PicoScope 6</span>
        <div class="winbtns">
          <button class="winbtn" aria-label="Minimieren">
            <svg width="14" height="14" viewBox="0 0 14 14"><rect x=".5" y="7.500" width="12" height="4.500" rx="1" fill="#fff" stroke="#4a5260" /></svg>
          </button>
          <button class="winbtn" aria-label="Wiederherstellen">
            <svg width="14" height="14" viewBox="0 0 14 14"><rect x="1" y="1" width="12" height="11" rx="1" fill="#fff" stroke="#4a5260" /><rect x="5" y="5" width="4" height="3" fill="#9cb8d4" stroke="#4a5260" /></svg>
          </button>
          <button class="winbtn close" aria-label="Schließen">
            <svg width="14" height="14" viewBox="0 0 14 14"><path d="M2.500 2.500L11.500 11.500M11.500 2.500L2.500 11.500" stroke="#4a4450" stroke-width="5" /><path d="M2.500 2.500L11.500 11.500M11.500 2.500L2.500 11.500" stroke="#fff" stroke-width="3" /></svg>
          </button>
        </div>
      </header>
      <nav class="menu">
        ${["Datei", "Bearbeiten", "Ansichten", "Messungen", "Werkzeuge", "Hilfe"].map(
          (m) => html`<button class="item">${m}</button>`,
        )}
      </nav>
      <scope-toolbars></scope-toolbars>
      <main class="view">
        <spectrum-view></spectrum-view>
        <measurement-table></measurement-table>
      </main>
      <trigger-bar></trigger-bar>
    `;
  }
}
